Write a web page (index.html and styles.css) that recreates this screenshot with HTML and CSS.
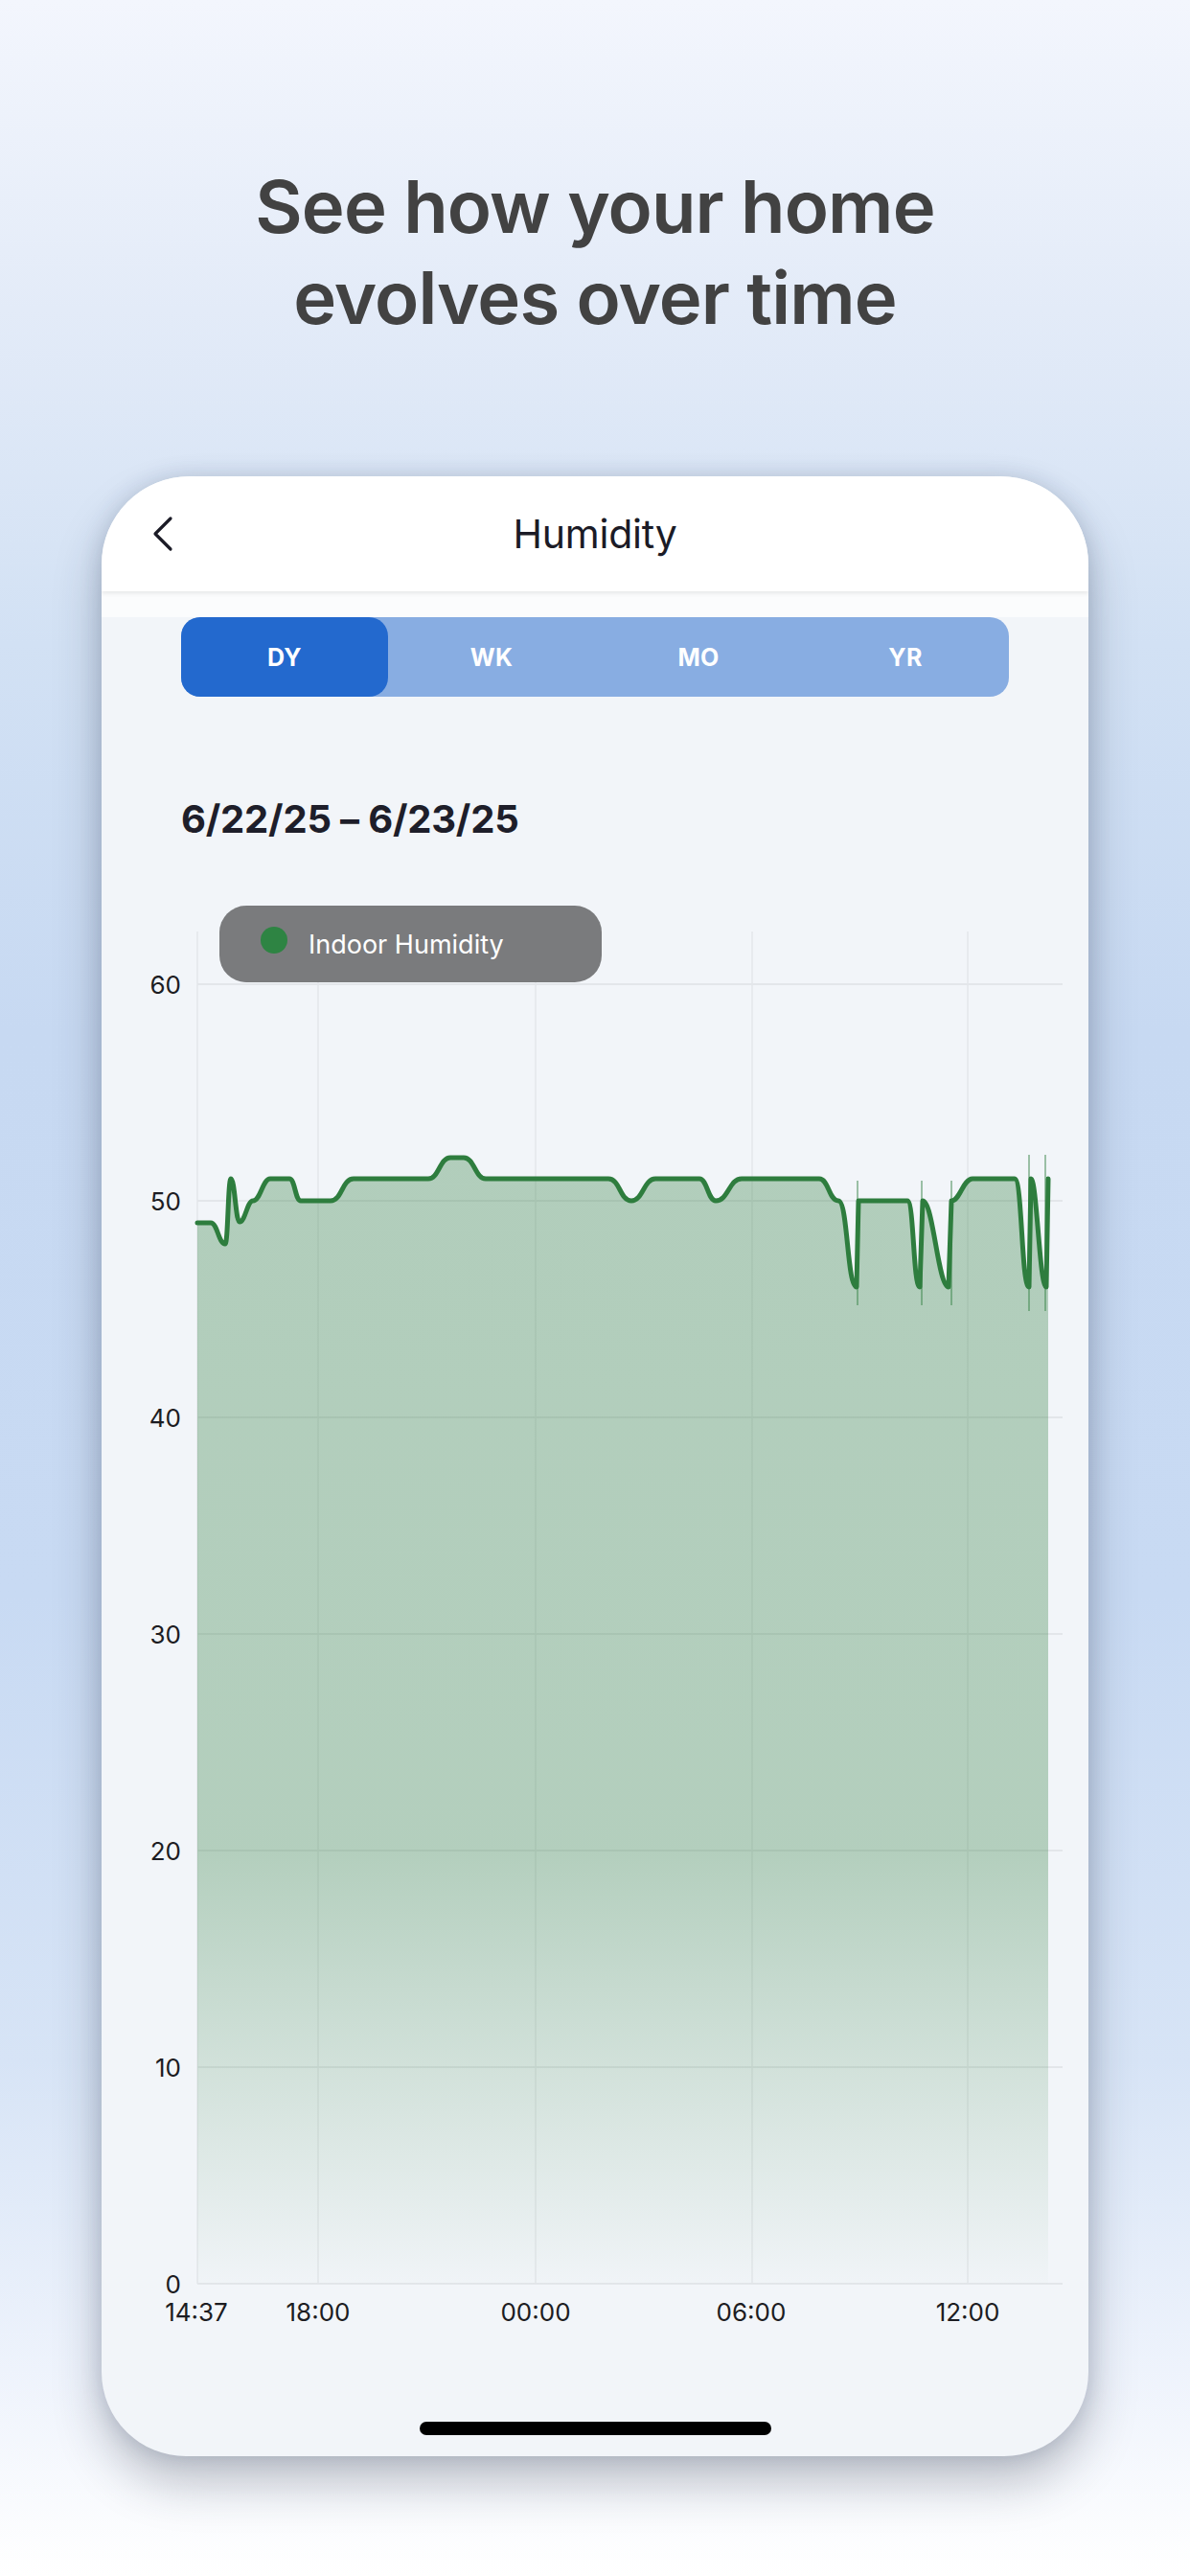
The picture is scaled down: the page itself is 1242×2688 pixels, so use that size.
FILE: index.html
```html
<!DOCTYPE html>
<html lang="en">
<head>
<meta charset="utf-8">
<title>Humidity</title>
<link rel="stylesheet" href="styles.css">
</head>
<body>
<div class="page">
  <h1 class="headline">See how your home<br>evolves over time</h1>
  <div class="phone">
    <header class="nav">
      <div class="nav-left">
        <svg class="back" width="24" height="40" viewBox="0 0 24 40"><path d="M19 4 L3 20 L19 36" fill="none" stroke="#1b1b26" stroke-width="3.2" stroke-linecap="round" stroke-linejoin="round"/></svg>
      </div>
      <div class="nav-title">Humidity</div>
      <div class="nav-right"></div>
    </header>
    <div class="nav-gap"></div>
    <div class="content">
      <div class="segments">
        <div class="seg active">DY</div>
        <div class="seg">WK</div>
        <div class="seg">MO</div>
        <div class="seg">YR</div>
      </div>
      <div class="date">6/22/25 – 6/23/25</div>
      <div class="chart">
        <svg class="chart-svg" width="1030" height="1570" viewBox="104 880 1030 1570">
          <defs>
            <linearGradient id="fillGrad" gradientUnits="userSpaceOnUse" x1="0" y1="1200" x2="0" y2="2383">
              <stop offset="0" stop-color="#2e7d3e" stop-opacity="0.33"/>
              <stop offset="0.62" stop-color="#2e7d3e" stop-opacity="0.32"/>
              <stop offset="1" stop-color="#2e7d3e" stop-opacity="0.01"/>
            </linearGradient>
          </defs>
          <g class="grid-v" stroke="#e3e6ea" stroke-width="1.5">
            <line x1="204" y1="972" x2="204" y2="2383"/>
            <line x1="330" y1="972" x2="330" y2="2383"/>
            <line x1="557" y1="972" x2="557" y2="2383"/>
            <line x1="783" y1="972" x2="783" y2="2383"/>
            <line x1="1008" y1="972" x2="1008" y2="2383"/>
          </g>
          <g class="grid-h" stroke="#e3e6ea" stroke-width="2">
            <line x1="204" y1="1027" x2="1107" y2="1027"/>
            <line x1="204" y1="1253" x2="1107" y2="1253"/>
            <line x1="204" y1="1479" x2="1107" y2="1479"/>
            <line x1="204" y1="1705" x2="1107" y2="1705"/>
            <line x1="204" y1="1931" x2="1107" y2="1931"/>
            <line x1="204" y1="2157" x2="1107" y2="2157"/>
            <line x1="204" y1="2383" x2="1107" y2="2383"/>
          </g>
          <path class="area" fill="url(#fillGrad)" d="M204,1276 H218 C225,1276 226,1298 233,1298 C236,1298 236,1230 239,1230 C243,1230 244,1275 248,1275 C254,1275 256,1253 262,1253 C270,1253 272,1230 280,1230 H300 C306,1230 306,1253 312,1253 H343 C355,1253 355,1230 367,1230 H445 C456,1230 457,1208 468,1208 H482 C493,1208 494,1230 505,1230 H633 C645,1230 645,1253 657,1253 C669,1253 670,1230 682,1230 H728 C736,1230 737,1253 745,1253 C758,1253 759,1230 772,1230 H853 C863,1230 863,1253 873,1253 C883,1253 882,1343 892,1343 L894,1253 H945 C952,1253 951,1343 958,1343 L961,1253 C972,1253 977,1343 988,1343 L991,1253 C1000,1253 1003,1230 1013,1230 H1057 C1065,1230 1064,1343 1072,1343 L1074,1230 C1080,1230 1083,1343 1090,1343 L1092,1230 L1092,2383 L204,2383 Z"/>
          <g class="spikes" stroke="#2e7d3e" stroke-width="1.2" stroke-opacity="0.75">
            <line x1="893" y1="1232" x2="893" y2="1362"/>
            <line x1="960" y1="1232" x2="960" y2="1362"/>
            <line x1="991" y1="1232" x2="991" y2="1362"/>
            <line x1="1072" y1="1205" x2="1072" y2="1368"/>
            <line x1="1089" y1="1205" x2="1089" y2="1368"/>
          </g>
          <path class="line" fill="none" stroke="#2e7d3e" stroke-width="5" stroke-linejoin="round" stroke-linecap="round" d="M204,1276 H218 C225,1276 226,1298 233,1298 C236,1298 236,1230 239,1230 C243,1230 244,1275 248,1275 C254,1275 256,1253 262,1253 C270,1253 272,1230 280,1230 H300 C306,1230 306,1253 312,1253 H343 C355,1253 355,1230 367,1230 H445 C456,1230 457,1208 468,1208 H482 C493,1208 494,1230 505,1230 H633 C645,1230 645,1253 657,1253 C669,1253 670,1230 682,1230 H728 C736,1230 737,1253 745,1253 C758,1253 759,1230 772,1230 H853 C863,1230 863,1253 873,1253 C883,1253 882,1343 892,1343 L894,1253 H945 C952,1253 951,1343 958,1343 L961,1253 C972,1253 977,1343 988,1343 L991,1253 C1000,1253 1003,1230 1013,1230 H1057 C1065,1230 1064,1343 1072,1343 L1074,1230 C1080,1230 1083,1343 1090,1343 L1092,1230"/>
          <g class="y-labels" text-anchor="end">
            <text x="187" y="1036.5">60</text>
            <text x="187" y="1262.5">50</text>
            <text x="187" y="1488.5">40</text>
            <text x="187" y="1714.5">30</text>
            <text x="187" y="1940.5">20</text>
            <text x="187" y="2166.5">10</text>
            <text x="187" y="2392.5">0</text>
          </g>
          <g class="x-labels" text-anchor="middle">
            <text x="203" y="2422">14:37</text>
            <text x="330" y="2422">18:00</text>
            <text x="557" y="2422">00:00</text>
            <text x="782" y="2422">06:00</text>
            <text x="1008" y="2422">12:00</text>
          </g>
        </svg>
        <div class="legend"><span class="dot"></span><span class="legend-text">Indoor Humidity</span></div>
      </div>
      <div class="home-bar"></div>
    </div>
  </div>
</div>
</body>
</html>
```

FILE: styles.css
```css
* { box-sizing: border-box; }
html, body { margin: 0; padding: 0; }
body {
  width: 1242px;
  height: 2688px;
  overflow: hidden;
  font-family: Inter, "Noto Sans", "Liberation Sans", sans-serif;
}
.page {
  width: 1242px;
  height: 2688px;
  display: flex;
  flex-direction: column;
  align-items: center;
  background: linear-gradient(180deg, #f3f6fd 0%, #e3ebf8 12%, #d2e1f4 25%, #c7d9f2 40%, #c8daf3 62%, #d7e4f6 80%, #eef3fc 92%, #ffffff 100%);
}
.headline {
  margin: 0;
  padding-top: 168px;
  font-size: 76px;
  line-height: 95px;
  font-weight: 600;
  color: #424242;
  text-align: center;
  letter-spacing: -0.9px;
}
.phone {
  margin-top: 139px;
  width: 1030px;
  height: 2066px;
  border-radius: 92px 92px 88px 88px;
  background: #f2f5f9;
  overflow: hidden;
  box-shadow: 0 28px 50px rgba(40, 48, 66, 0.28), 0 0 22px rgba(50, 70, 110, 0.18);
  display: flex;
  flex-direction: column;
}
.nav {
  height: 120px;
  flex: 0 0 120px;
  background: #ffffff;
  display: grid;
  grid-template-columns: 1fr auto 1fr;
  align-items: center;
  position: relative;
  z-index: 2;
  box-shadow: 0 2px 5px rgba(0, 0, 0, 0.09);
}
.nav-left {
  padding-left: 53px;
  display: flex;
  align-items: center;
}
.back { display: block; }
.nav-title {
  font-size: 41px;
  font-weight: 400;
  color: #1b1b26;
  letter-spacing: -0.2px;
}
.nav-gap {
  height: 27px;
  flex: 0 0 27px;
  background: #fbfcfd;
}
.content {
  flex: 1;
  display: flex;
  flex-direction: column;
}
.segments {
  margin-left: 83px;
  width: 864px;
  height: 83px;
  display: grid;
  grid-template-columns: repeat(4, 1fr);
  background: #88ade2;
  border-radius: 20px;
}
.seg {
  display: flex;
  align-items: center;
  justify-content: center;
  color: #ffffff;
  font-size: 25px;
  font-weight: 700;
  letter-spacing: 0.3px;
}
.seg.active {
  background: #2369ce;
  border-radius: 20px;
}
.date {
  margin-top: 104px;
  margin-left: 83px;
  font-size: 40px;
  line-height: 48px;
  font-weight: 700;
  color: #1e1e2a;
  letter-spacing: -0.2px;
}
.chart {
  position: relative;
  width: 1030px;
  height: 1570px;
  margin-top: 1px;
}
.chart-svg {
  display: block;
}
.y-labels text, .x-labels text {
  font-family: Inter, "Noto Sans", sans-serif;
  font-size: 26px;
  fill: #1c1c22;
}
.legend {
  position: absolute;
  left: 123px;
  top: 65px;
  width: 399px;
  height: 80px;
  border-radius: 28px;
  background: #7a7b7d;
  display: flex;
  align-items: center;
  padding-left: 43px;
  gap: 22px;
}
.dot {
  width: 28px;
  height: 28px;
  border-radius: 50%;
  background: #2e8443;
  margin-top: -8px;
}
.legend-text {
  color: #ffffff;
  font-size: 27px;
  font-weight: 400;
}
.home-bar {
  margin-top: 77px;
  align-self: center;
  width: 367px;
  height: 14px;
  border-radius: 7px;
  background: #000000;
}
```
